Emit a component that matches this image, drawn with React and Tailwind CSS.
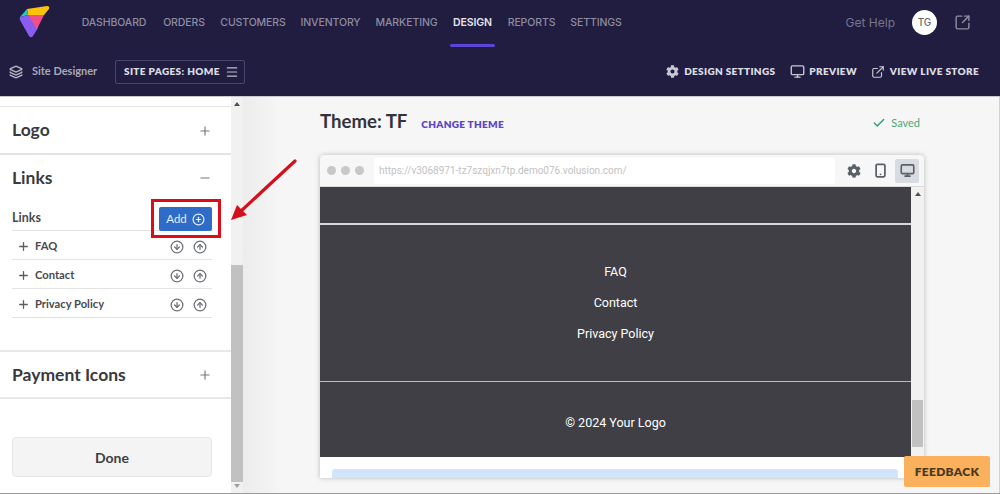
import React from "react";
import { Layers, Menu, Monitor, ExternalLink, SquareArrowOutUpRight, Plus, Minus, CircleArrowDown, CircleArrowUp, CirclePlus, Check, Smartphone } from "lucide-react";
import { FaCog } from "react-icons/fa";

const nav = [
  ["DASHBOARD", "w-[66px]"],
  ["ORDERS", "w-[42px]"],
  ["CUSTOMERS", "w-[64px]"],
  ["INVENTORY", "w-[59px]"],
  ["MARKETING", "w-[61px]"],
  ["DESIGN", "w-[39px]"],
  ["REPORTS", "w-[47px]"],
  ["SETTINGS", "w-[50px]"],
];

function Logo() {
  return (
    <svg width="32" height="34" viewBox="0 0 32 34" className="shrink-0">
      <path d="M8 4 L28 1 Q31 1 30 4 L25 10 L9 10 Z" fill="#fcc10b" />
      <path d="M8 4 L1 12 L9 10 Z" fill="#2cc5c0" />
      <path d="M1 12 Q0 14 1.5 16 L10 31 Q12 33.5 14 31 L19 23 L9 10 Z" fill="#8a5cf0" />
      <path d="M9 10 L25 10 L18 24 Z" fill="#f0508a" />
    </svg>
  );
}

function SectionHead({ title, open, h = "h-[46px]" }) {
  return (
    <div className={`${h} flex items-center justify-between pl-[12px] pr-[19px] pt-[1px]`}>
      <span className="text-[17.5px] font-bold text-[#3a3a3e]">{title}</span>
      {open ? <Minus size={14} className="text-[#77797f]" /> : <Plus size={14} className="text-[#77797f]" />}
    </div>
  );
}

function LinkRow({ label }) {
  return (
    <div className="h-[29px] flex items-center border-b border-[#e2e2e2] pl-[5px] pr-[5px] pt-[3px]">
      <Plus size={13} strokeWidth={2.4} className="text-[#5b5d63]" />
      <span className="ml-[5px] flex-1 text-[11.2px] font-bold text-[#4a4a4e]">{label}</span>
      <CircleArrowDown size={14} strokeWidth={2.2} className="text-[#6f7278]" />
      <CircleArrowUp size={14} strokeWidth={2.2} className="text-[#6f7278] ml-[9px]" />
    </div>
  );
}

export default function App() {
  return (
    <div className="relative w-[1000px] h-[494px] overflow-hidden flex flex-col bg-[#f6f6f6] border-b border-[#9a9a9a] font-['Lato',sans-serif]">
      <header className="h-[97px] shrink-0 bg-[#201d41] border-b border-[#c9c9d0] flex flex-col">
        <div className="h-[47px] flex items-start pl-[19px] pr-[29px]">
          <div className="mt-[5px]"><Logo /></div>
          <nav className="ml-[30px] flex gap-[16px] h-[47px] font-['Inter',sans-serif]">
            {nav.map(([n, w]) => (
              <div key={n} className={`relative ${w} pt-[16px] flex justify-center whitespace-nowrap text-[10.5px] font-medium leading-[14px] tracking-[-0.1px] ${n === "DESIGN" ? "text-[#e4e4ea] font-semibold" : "text-[#8e8ca0]"}`}>
                {n}
                {n === "DESIGN" && <span className="absolute left-[-3px] right-[-3px] top-[44px] h-[2.5px] bg-[#5a45d6] rounded" />}
              </div>
            ))}
          </nav>
          <div className="ml-auto flex items-center h-[45px] font-['Inter',sans-serif]">
            <span className="text-[12px] text-[#77758c]">Get Help</span>
            <span className="ml-[17px] w-[25px] h-[25px] rounded-full bg-white flex items-center justify-center text-[10px] font-medium text-[#66666a]">TG</span>
            <SquareArrowOutUpRight size={17} strokeWidth={2} className="ml-[17px] text-[#8e8ca0]" />
          </div>
        </div>
        <div className="flex-1 flex items-center pl-[9px] pr-[21px]">
          <Layers size={14} strokeWidth={2.4} className="text-[#b9b8c4]" />
          <span className="ml-[9px] w-[64px] whitespace-nowrap text-[11px] font-bold text-[#a9a8b6]">Site Designer</span>
          <div className="ml-[19px] h-[24px] w-[130px] border border-[#48466a] rounded-[2px] flex items-center pl-[8px]">
            <span className="text-[10px] font-extrabold tracking-[0.35px] text-[#dcdce2] whitespace-nowrap">SITE PAGES: HOME</span>
            <Menu size={14} className="ml-[5px] text-[#c0bfca]" />
          </div>
          <div className="ml-auto flex items-center text-[10px] font-extrabold tracking-[0.32px] text-[#dcdce2]">
            <FaCog size={13} className="text-[#c8c8d0]" />
            <span className="ml-[5px]">DESIGN SETTINGS</span>
            <Monitor size={15} strokeWidth={2.2} className="ml-[15px] text-[#c8c8d0]" />
            <span className="ml-[4px]">PREVIEW</span>
            <ExternalLink size={14} className="ml-[14px] text-[#c8c8d0]" />
            <span className="ml-[5px]">VIEW LIVE STORE</span>
          </div>
        </div>
      </header>

      <div className="flex-1 flex min-h-0">
        <aside className="w-[231px] shrink-0 bg-white overflow-hidden flex flex-col">
          <div className="h-[10px] border-b border-[#e4e4e4]" />
          <SectionHead title="Logo" />
          <div className="border-t-2 border-[#e4e4e4]">
            <SectionHead title="Links" open h="h-[45px]" />
            <div className="pl-[12px] pr-[19px]">
              <div className="h-[31px] flex items-start justify-between border-b border-[#e2e2e2]">
                <span className="mt-[2px] text-[12.5px] font-bold text-[#4a4a4e] leading-[32px] h-[26px]">Links</span>
                <button className="mt-[7px] w-[53px] h-[24px] rounded-[2px] bg-[#2f6cc8] text-[#e6eefc] text-[11.5px] flex items-center justify-center gap-[5px]">
                  Add <CirclePlus size={13} strokeWidth={2.2} />
                </button>
              </div>
              <LinkRow label="FAQ" />
              <LinkRow label="Contact" />
              <LinkRow label="Privacy Policy" />
            </div>
          </div>
          <div className="mt-[32px] border-t-2 border-b-2 border-[#e8e8e8]">
            <SectionHead title="Payment Icons" h="h-[45px]" />
          </div>
          <div className="pl-[12px] pr-[19px] mt-[38px]">
            <button className="w-full h-[40px] bg-[#f4f4f4] border border-[#e6e6e6] rounded-[4px] text-[14px] font-bold text-[#3e3e42]">Done</button>
          </div>
        </aside>

        <div className="w-[12px] shrink-0 bg-[#f1f1f1] flex flex-col items-center justify-between py-[5px]">
          <span className="w-0 h-0 border-x-[3px] border-x-transparent border-b-[4px] border-b-[#505050]" />
          <span className="flex-1 w-full flex flex-col justify-end pb-[2px]"><span className="block w-full h-[217px] bg-[#c1c1c1]" /></span>
          <span className="w-0 h-0 border-x-[3px] border-x-transparent border-t-[4px] border-t-[#a0a0a0]" />
        </div>

        <main className="flex-1 pl-[77px] pr-[75px] bg-gradient-to-r from-[#ececec] via-[#f6f6f6] via-[5%] to-[#f6f6f6] border-r border-[#d0d0d0] min-w-0">
          <div className="h-[58px] flex items-start pt-[12px]">
            <span className="text-[18.6px] font-bold text-[#333338] leading-[24px]">Theme: TF</span>
            <span className="ml-[14px] mt-[8px] text-[10px] font-extrabold tracking-[0.3px] text-[#5b45c8]">CHANGE THEME</span>
            <span className="ml-auto mr-[4px] mt-[6px] flex items-center text-[11px] text-[#46a878]">
              <Check size={14} strokeWidth={2.4} className="text-[#2d9e6b]" />
              <span className="ml-[5px]">Saved</span>
            </span>
          </div>

          <div className="w-[604px] h-[323px] bg-[#f7f7f7] rounded-t-[4px] shadow-[0_0_5px_rgba(0,0,0,0.25)] flex flex-col overflow-hidden">
            <div className="h-[32px] shrink-0 flex items-center pl-[7px] pr-[5px] border-b border-[#d8d8d8]">
              <div className="flex gap-[5px]">
                <span className="w-[9px] h-[9px] rounded-full bg-[#c8c8c8]" />
                <span className="w-[9px] h-[9px] rounded-full bg-[#c8c8c8]" />
                <span className="w-[9px] h-[9px] rounded-full bg-[#c8c8c8]" />
              </div>
              <div className="ml-[10px] w-[461px] h-[26px] bg-white rounded-[2px] flex items-center pl-[5px] font-['Roboto',sans-serif] text-[10px] text-[#c2c2c2]">
                https://v3068971-tz7szqjxn7tp.demo076.volusion.com/
              </div>
              <FaCog size={14} className="ml-[12px] text-[#5a6068]" />
              <Smartphone size={15} strokeWidth={2.8} className="ml-[12px] text-[#5a6068]" />
              <span className="ml-[7px] w-[24px] h-[24px] rounded-[2px] bg-[#d8dbe1] flex items-center justify-center">
                <Monitor size={15} strokeWidth={2.6} className="text-[#5a6068]" />
              </span>
            </div>
            <div className="flex h-[270px] shrink-0">
              <div className="w-[591px] bg-[#403f45] flex flex-col text-white font-['Roboto',sans-serif] text-[12.5px]">
                <div className="h-[38px] border-b-2 border-[#d8d8da]" />
                <div className="flex flex-col items-center gap-[13px] pt-[38px] h-[157px] leading-[18px] border-b border-[#bdbdc0]">
                  <span>FAQ</span>
                  <span>Contact</span>
                  <span>Privacy Policy</span>
                </div>
                <div className="flex justify-center pt-[32px] leading-[18px]">© 2024 Your Logo</div>
              </div>
              <div className="w-[13px] bg-[#f1f1f1] flex flex-col items-center pt-[5px]">
                <span className="w-0 h-0 border-x-[3px] border-x-transparent border-b-[4px] border-b-[#505050]" />
                <span className="mt-[204px] w-[11px] h-[47px] bg-[#c1c1c1]" />
              </div>
            </div>
            <div className="flex-1 bg-white pl-[12px] pr-[26px] pt-[12px]">
              <div className="h-[20px] bg-[#cfe5fb] rounded-t-[3px]" />
            </div>
          </div>
        </main>
      </div>

      <div className="absolute left-[904px] top-[456px] w-[86px] h-[31px] rounded-[2px] bg-[#fbb05c] flex items-center justify-center text-[12px] font-extrabold tracking-[0.3px] text-[#4a3a24]">FEEDBACK</div>
      <div className="absolute left-[151px] top-[199px] w-[70px] h-[39px] border-[3px] border-[#dd0d17]" />
      <svg className="absolute left-[226px] top-[155px]" width="76" height="70" viewBox="0 0 76 70">
        <path d="M69 6 L14 57" stroke="#d3101c" strokeWidth="3.2" strokeLinecap="round" fill="none" />
        <path d="M5 65 L11 50 L21 60 Z" fill="#d3101c" />
      </svg>
    </div>
  );
}
